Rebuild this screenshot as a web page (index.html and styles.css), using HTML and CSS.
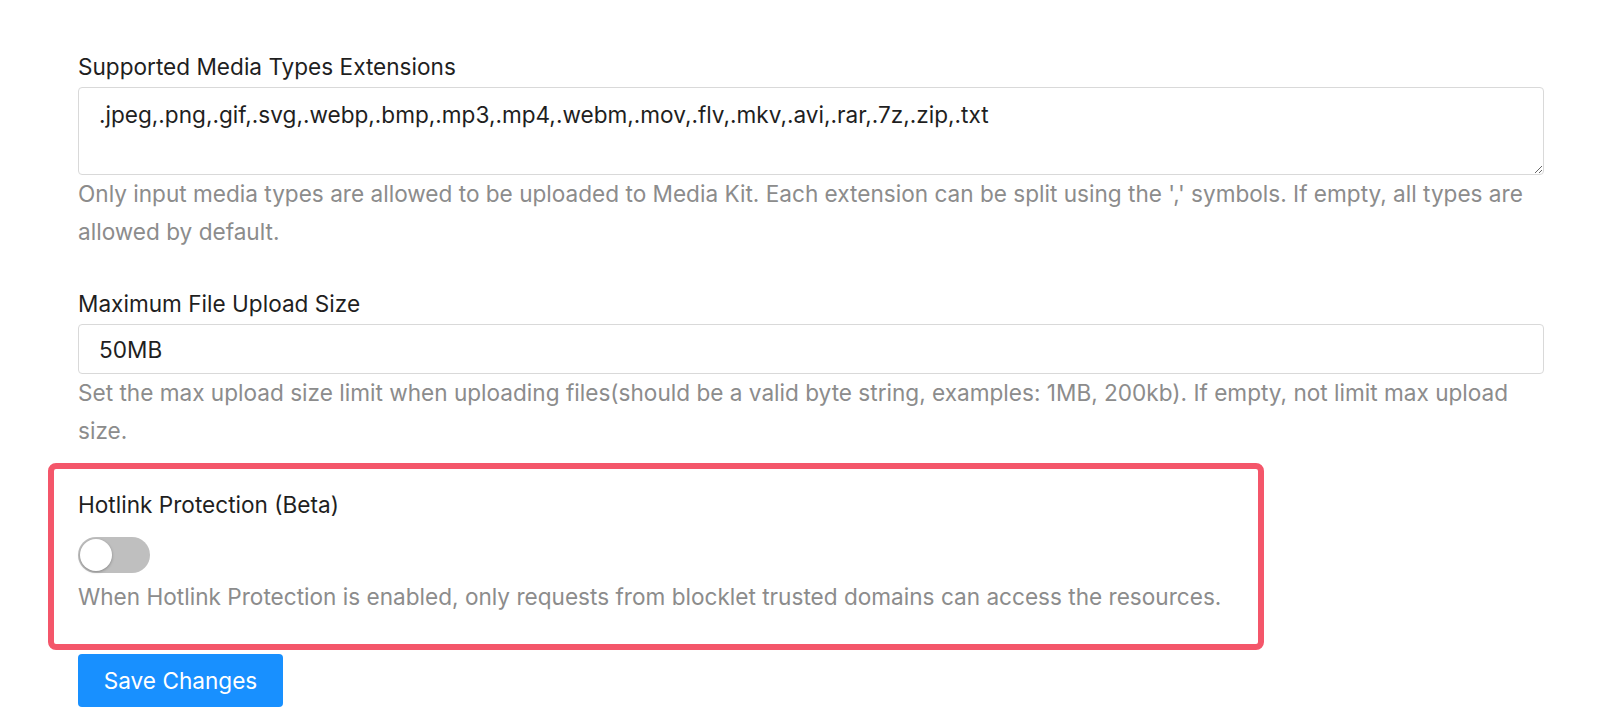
FILE: index.html
```html
<!DOCTYPE html>
<html lang="en">
<head>
<meta charset="utf-8">
<title>Media Kit Settings</title>
<link rel="stylesheet" href="styles.css">
</head>
<body>
<main class="page">
  <form class="form">
    <div class="item">
      <label class="label" for="ext">Supported Media Types Extensions</label>
      <textarea id="ext" class="textarea" readonly>.jpeg,.png,.gif,.svg,.webp,.bmp,.mp3,.mp4,.webm,.mov,.flv,.mkv,.avi,.rar,.7z,.zip,.txt</textarea>
      <div class="help">Only input media types are allowed to be uploaded to Media Kit. Each extension can be split using the ',' symbols. If empty, all types are allowed by default.</div>
    </div>
    <div class="item item-tight">
      <label class="label" for="size">Maximum File Upload Size</label>
      <input id="size" class="input" type="text" value="50MB" readonly>
      <div class="help">Set the max upload size limit when uploading files(should be a valid byte string, examples: 1MB, 200kb). If empty, not limit max upload size.</div>
    </div>
    <div class="item highlight">
      <div class="label">Hotlink Protection (Beta)</div>
      <button type="button" class="switch" aria-checked="false" role="switch"><span class="knob"></span></button>
      <div class="help">When Hotlink Protection is enabled, only requests from blocklet trusted domains can access the resources.</div>
    </div>
    <button type="button" class="btn-primary">Save Changes</button>
  </form>
</main>
</body>
</html>
```
FILE: styles.css
```css
* { box-sizing: border-box; }
html, body {
  margin: 0;
  padding: 0;
  background: #ffffff;
}
body {
  font-family: "Inter", "Liberation Sans", sans-serif;
  color: #262626;
}
.page {
  padding: 52px 0 0 78px;
  width: 1544px;
}
.form {
  display: flex;
  flex-direction: column;
  align-items: flex-start;
}
.item {
  display: flex;
  flex-direction: column;
  width: 100%;
  margin-bottom: 38px;
}
.item-tight {
  margin-bottom: 13px;
}
.label {
  font-size: 22.6px;
  line-height: 30px;
  color: #1f1f1f;
  margin-bottom: 5px;
}
.textarea {
  display: block;
  width: 100%;
  height: 88px;
  border: 1px solid #d9d9d9;
  border-radius: 4px;
  padding: 12px 20px;
  font-family: "Inter", "Liberation Sans", sans-serif;
  font-size: 22.6px;
  line-height: 30px;
  color: #1f1f1f;
  resize: vertical;
  outline: none;
}
.input {
  display: block;
  width: 100%;
  height: 50px;
  border: 1px solid #d9d9d9;
  border-radius: 4px;
  padding: 0 20px;
  font-family: "Inter", "Liberation Sans", sans-serif;
  font-size: 22.6px;
  color: #1f1f1f;
  outline: none;
}
.help {
  font-size: 22.6px;
  line-height: 38px;
  color: #8c8c8c;
}
.highlight {
  width: 1216px;
  margin-left: -30px;
  margin-bottom: 4px;
  padding: 21px 24px 28px;
  border: 6px solid #f4566a;
  border-radius: 8px;
}
.switch {
  position: relative;
  width: 72px;
  height: 36px;
  margin: 12px 0 5px;
  padding: 0;
  border: none;
  border-radius: 18px;
  background: #bfbfbf;
  cursor: pointer;
}
.knob {
  position: absolute;
  left: 2px;
  top: 2px;
  width: 32px;
  height: 32px;
  border-radius: 50%;
  background: #ffffff;
  box-shadow: 0 1px 3px rgba(0, 0, 0, 0.3);
}
.btn-primary {
  width: 205px;
  height: 53px;
  border: none;
  border-radius: 4px;
  background: #1890ff;
  color: #ffffff;
  font-family: "Inter", "Liberation Sans", sans-serif;
  font-size: 22.6px;
  cursor: pointer;
}
```
